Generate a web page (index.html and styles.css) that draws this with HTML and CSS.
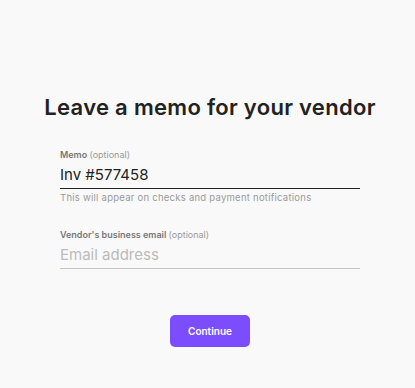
FILE: index.html
```html
<!DOCTYPE html>
<html lang="en">
<head>
    <meta charset="UTF-8">
    <meta name="viewport" content="width=device-width, initial-scale=1.0">
    <title>Vendor memo</title>
    <link rel="stylesheet" href="styles.css">
</head>
<body>
    <div class="memo-page">
        <h1 class="title">Leave a memo for your vendor</h1>
        <form class="memo-form">
            <div class="field">
                <label class="field-label" for="memo">Memo <span class="optional">(optional)</span></label>
                <input class="field-input filled" id="memo" type="text" value="Inv #577458">
                <div class="hint">This will appear on checks and payment notifications</div>
            </div>
            <div class="field">
                <label class="field-label" for="email">Vendor's business email <span class="optional">(optional)</span></label>
                <input class="field-input" id="email" type="email" placeholder="Email address">
            </div>
            <div class="actions">
                <button class="button" type="button">Continue</button>
            </div>
        </form>
    </div>
</body>
</html>
```

FILE: styles.css
```css
* {
    box-sizing: border-box;
    margin: 0;
    padding: 0;
}
body {
    background: #f9f9f9;
    font-family: Inter, "Open Sans", sans-serif;
    color: #222;
}
.memo-page {
    display: flex;
    flex-direction: column;
    align-items: center;
    padding-top: 94px;
    padding-left: 5px;
}
.title {
    font-size: 22px;
    font-weight: 600;
    letter-spacing: 0.3px;
    color: #222;
    margin-bottom: 29px;
}
.memo-form {
    width: 300px;
}
.field {
    margin-bottom: 26px;
}
.field-label {
    display: block;
    font-size: 9px;
    line-height: 12px;
    font-weight: 600;
    color: #777;
}
.field-label .optional {
    font-weight: 400;
    color: #999;
}
.field-input {
    display: block;
    width: 100%;
    font-family: inherit;
    font-size: 15px;
    line-height: 18px;
    color: #222;
    background: transparent;
    border: none;
    border-bottom: 1px solid #c4c4c4;
    padding: 5px 0 4px;
    outline: none;
}
.field-input.filled {
    border-bottom: 1.5px solid #222;
}
.field-input::placeholder {
    color: #bbb;
}
.hint {
    font-size: 9.5px;
    letter-spacing: 0.25px;
    color: #999;
    margin-top: 3px;
}
.actions {
    display: flex;
    justify-content: center;
    padding-top: 20px;
}
.button {
    width: 80px;
    height: 32px;
    border: none;
    border-radius: 5px;
    background: #7c4dff;
    color: #fff;
    font-family: inherit;
    font-size: 10px;
    font-weight: 600;
    cursor: pointer;
}
```
